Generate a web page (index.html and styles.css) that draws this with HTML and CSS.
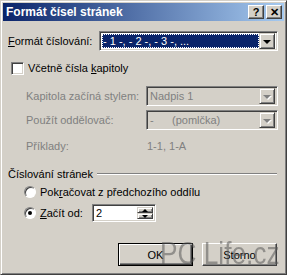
FILE: index.html
```html
<!DOCTYPE html>
<html lang="cs">
<head>
    <meta charset="UTF-8">
    <title>Formát čísel stránek</title>
    <link rel="stylesheet" href="styles.css">
</head>
<body>
    <div class="window">
        <div class="titlebar">
            <span class="title">Formát čísel stránek</span>
            <div class="tbuttons">
                <span class="tbtn">?</span>
                <span class="tbtn">✕</span>
            </div>
        </div>

        <div class="content">
            <div class="row first">
                <span class="label"><u>F</u>ormát číslování:</span>
                <div class="combo wide">
                    <span class="value selected">- 1 -, - 2 -, - 3 -, ...</span>
                    <span class="arrow"><i class="tri"></i></span>
                </div>
            </div>

            <div class="row check">
                <span class="box"></span>
                <span>Včetně čísla <u>k</u>apitoly</span>
            </div>

            <div class="row sub">
                <span class="label dis">Kapitola začíná stylem:</span>
                <div class="combo narrow off">
                    <span class="value">Nadpis 1</span>
                    <span class="arrow"><i class="tri"></i></span>
                </div>
            </div>
            <div class="row sub second">
                <span class="label dis">Použít oddělovač:</span>
                <div class="combo narrow off">
                    <span class="value">-&nbsp;&nbsp;&nbsp;&nbsp;&nbsp;&nbsp;(pomlčka)</span>
                    <span class="arrow"><i class="tri"></i></span>
                </div>
            </div>
            <div class="row sub example">
                <span class="label dis">Příklady:</span>
                <span class="dis ex">1-1, 1-A</span>
            </div>

            <div class="group">
                <span>Číslování stránek</span>
                <span class="line"></span>
            </div>

            <div class="row radio">
                <span class="dot"></span>
                <span>Pok<u>r</u>ačovat z předchozího oddílu</span>
            </div>
            <div class="row radio start">
                <span class="dot on"></span>
                <span class="label short"><u>Z</u>ačít od:</span>
                <div class="spin">
                    <span class="value">2</span>
                    <span class="spinbtns">
                        <span class="sbtn"><i class="up"></i></span>
                        <span class="sbtn"><i class="down"></i></span>
                    </span>
                </div>
            </div>

            <div class="buttons">
                <span class="btn default">OK</span>
                <span class="btn">Storno</span>
            </div>
        </div>
        <div class="mark">PC Life.cz</div>
    </div>
</body>
</html>
```

FILE: styles.css
```css
body{
    margin: 0;
    background: #d4d0c8;
}
.window{
    position: relative;
    width: 287px;
    height: 275px;
    box-sizing: border-box;
    background: #d4d0c8;
    border: 1px solid;
    border-color: #d4d0c8 #404040 #404040 #d4d0c8;
    box-shadow: inset 1px 1px #fff, inset -1px -1px #808080;
    padding: 2px;
    font-family: "Liberation Sans", Arial, sans-serif;
    font-size: 11px;
    color: #000;
}
.titlebar{
    height: 18px;
    display: flex;
    align-items: center;
    justify-content: space-between;
    background: linear-gradient(to right, #0a246a, #a6caf0);
    padding: 0 2px 0 3px;
}
.title{
    color: #fff;
    font-weight: bold;
    font-size: 12px;
}
.tbuttons{
    display: flex;
    gap: 2px;
}
.tbtn{
    width: 16px;
    height: 14px;
    box-sizing: border-box;
    background: #d4d0c8;
    border: 1px solid;
    border-color: #fff #404040 #404040 #fff;
    box-shadow: inset -1px -1px #808080;
    display: flex;
    align-items: center;
    justify-content: center;
    font-weight: bold;
    font-size: 11px;
    line-height: 1;
}
.content{
    padding: 10px 6px 0 5px;
}
.row{
    display: flex;
    align-items: center;
}
.label{
    width: 91px;
}
.sub .label{
    width: 120px;
    padding-left: 18px;
}
.dis{
    color: #808080;
}
.combo{
    height: 20px;
    box-sizing: border-box;
    border: 1px solid;
    border-color: #808080 #fff #fff #808080;
    box-shadow: inset 1px 1px #404040, inset -1px -1px #d4d0c8;
    background: #fff;
    display: flex;
    align-items: center;
    padding: 2px;
}
.combo.wide{
    flex: 1;
}
.combo.narrow{
    flex: 1;
}
.combo.off{
    background: #d4d0c8;
    color: #808080;
}
.value{
    flex: 1;
    height: 100%;
    display: flex;
    align-items: center;
    padding-left: 1px;
}
.selected{
    background: #0a246a;
    color: #fff;
    outline: 1px dotted #fff;
    outline-offset: -1px;
}
.arrow{
    width: 16px;
    height: 16px;
    box-sizing: border-box;
    background: #d4d0c8;
    border: 1px solid;
    border-color: #d4d0c8 #404040 #404040 #d4d0c8;
    box-shadow: inset 1px 1px #fff, inset -1px -1px #808080;
    display: flex;
    align-items: center;
    justify-content: center;
}
.tri{
    width: 0;
    height: 0;
    border-left: 4px solid transparent;
    border-right: 4px solid transparent;
    border-top: 4px solid #000;
    margin-top: 1px;
}
.off .tri{
    border-top-color: #808080;
    filter: drop-shadow(1px 1px 0 #fff);
}
.check{
    margin-top: 10px;
    height: 14px;
    padding-left: 3px;
}
.box{
    width: 13px;
    height: 13px;
    box-sizing: border-box;
    background: #fff;
    border: 1px solid;
    border-color: #808080 #fff #fff #808080;
    box-shadow: inset 1px 1px #404040, inset -1px -1px #d4d0c8;
    margin-right: 4px;
}
.sub{
    margin-top: 11px;
}
.sub.second{
    margin-top: 4px;
}
.example{
    margin-top: 9px;
    height: 14px;
}
.ex{
    padding-left: 1px;
}
.group{
    display: flex;
    align-items: center;
    margin-top: 14px;
    height: 14px;
}
.line{
    flex: 1;
    margin-left: 4px;
    height: 0;
    border-top: 1px solid #808080;
    border-bottom: 1px solid #fff;
    margin-right: 1px;
}
.radio{
    padding-left: 16px;
    margin-top: 4px;
    height: 14px;
}
.dot{
    width: 12px;
    height: 12px;
    box-sizing: border-box;
    border-radius: 50%;
    background: #fff;
    border: 1px solid;
    border-color: #808080 #fff #fff #808080;
    box-shadow: inset 1px 1px #404040;
    margin-right: 4px;
    display: flex;
    align-items: center;
    justify-content: center;
}
.dot.on::after{
    content: "";
    width: 4px;
    height: 4px;
    border-radius: 50%;
    background: #000;
}
.start{
    margin-top: 5px;
    height: 18px;
}
.label.short{
    width: 52px;
}
.spin{
    width: 64px;
    height: 18px;
    box-sizing: border-box;
    border: 1px solid;
    border-color: #808080 #fff #fff #808080;
    box-shadow: inset 1px 1px #404040, inset -1px -1px #d4d0c8;
    background: #fff;
    display: flex;
    padding: 2px;
}
.spinbtns{
    width: 16px;
    display: flex;
    flex-direction: column;
}
.sbtn{
    flex: 1;
    box-sizing: border-box;
    background: #d4d0c8;
    border: 1px solid;
    border-color: #d4d0c8 #404040 #404040 #d4d0c8;
    box-shadow: inset 1px 1px #fff, inset -1px -1px #808080;
    display: flex;
    align-items: center;
    justify-content: center;
}
.up, .down{
    width: 0;
    height: 0;
    border-left: 3px solid transparent;
    border-right: 3px solid transparent;
}
.up{
    border-bottom: 3px solid #000;
}
.down{
    border-top: 3px solid #000;
}
.buttons{
    display: flex;
    justify-content: flex-end;
    gap: 9px;
    margin-top: 21px;
    padding-right: 1px;
}
.btn{
    width: 75px;
    height: 23px;
    box-sizing: border-box;
    background: #d4d0c8;
    border: 1px solid;
    border-color: #fff #404040 #404040 #fff;
    box-shadow: inset -1px -1px #808080;
    display: flex;
    align-items: center;
    justify-content: center;
}
.btn.default{
    border: 1px solid #000;
    box-shadow: inset 1px 1px #fff, inset -1px -1px #404040, inset -2px -2px #808080;
}
.mark{
    position: absolute;
    left: 159px;
    top: 234px;
    font-size: 32px;
    line-height: 37px;
    color: rgba(90, 90, 90, 0.55);
    white-space: nowrap;
    transform: scaleX(0.82);
    transform-origin: left top;
}
```
